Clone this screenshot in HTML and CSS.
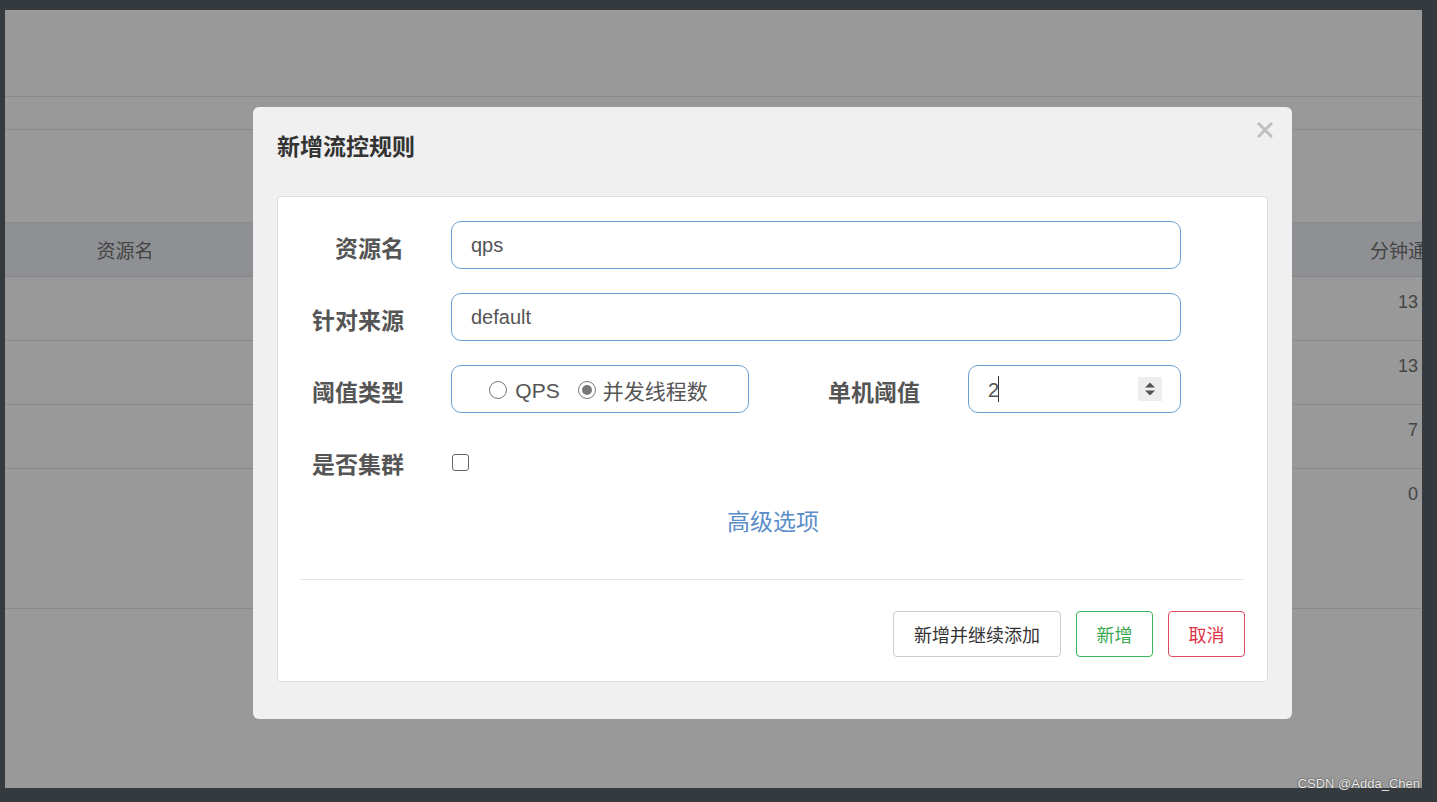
FILE: index.html
```html
<!DOCTYPE html>
<html lang="zh-CN">
<head>
    <meta charset="UTF-8">
    <meta name="viewport" content="width=device-width, initial-scale=1.0">
    <title>新增流控规则</title>
    <link rel="stylesheet" href="styles.css">
</head>
<body>

    <div class="frame">
        <div class="screen">
            <!-- Page behind the dialog -->
            <div class="top-bar"></div>
            <div class="sub-bar"></div>
            <div class="spacer"></div>

            <div class="table-head">
                <div class="cell-name">资源名</div>
                <div class="cell-fill"></div>
                <div class="cell-last">分钟通过</div>
            </div>
            <div class="table-row">
                <div class="cell-fill"></div>
                <div class="cell-num">13</div>
            </div>
            <div class="table-row">
                <div class="cell-fill"></div>
                <div class="cell-num">13</div>
            </div>
            <div class="table-row">
                <div class="cell-fill"></div>
                <div class="cell-num">7</div>
            </div>
            <div class="table-row tall">
                <div class="cell-fill"></div>
                <div class="cell-num">0</div>
            </div>

            <!-- Dialog -->
            <div class="modal">
                <span class="close">
                    <svg width="16" height="16" viewBox="0 0 16 16">
                        <path d="M2 2 L14 14 M14 2 L2 14" stroke="#bfbfbf" stroke-width="3" stroke-linecap="square"/>
                    </svg>
                </span>
                <div class="modal-header">
                    <h3>新增流控规则</h3>
                </div>

                <div class="modal-card">
                    <div class="form-row">
                        <label class="form-label">资源名</label>
                        <input class="form-input" type="text" value="qps">
                    </div>
                    <div class="form-row">
                        <label class="form-label">针对来源</label>
                        <input class="form-input" type="text" value="default">
                    </div>
                    <div class="form-row">
                        <label class="form-label">阈值类型</label>
                        <div class="radio-box">
                            <span class="radio"></span>
                            <span class="radio-text">QPS</span>
                            <span class="radio checked"></span>
                            <span class="radio-text cjk">并发线程数</span>
                        </div>
                        <label class="form-label inline">单机阈值</label>
                        <div class="number-input">
                            <span class="number-value">2</span><span class="caret"></span>
                            <span class="spinner">
                                <svg width="12" height="14" viewBox="0 0 12 14">
                                    <path d="M1 5.5 L6 0.5 L11 5.5 Z M1 8.5 L6 13.5 L11 8.5 Z" fill="#555"/>
                                </svg>
                            </span>
                        </div>
                    </div>
                    <div class="form-row check-row">
                        <label class="form-label">是否集群</label>
                        <span class="checkbox"></span>
                    </div>

                    <div class="advanced"><a href="#">高级选项</a></div>

                    <div class="divider"></div>

                    <div class="actions">
                        <button class="btn btn-default">新增并继续添加</button>
                        <button class="btn btn-success">新增</button>
                        <button class="btn btn-danger">取消</button>
                    </div>
                </div>
            </div>
        </div>
    </div>

    <div class="watermark">CSDN @Adda_Chen</div>

</body>
</html>
```

FILE: styles.css
```css
body {
    font-family: "Liberation Sans", "Noto Sans CJK SC", sans-serif;
    margin: 0;
    padding: 0;
    background-color: #353a3e;
    position: relative;
    width: 1437px;
    height: 802px;
    overflow: hidden;
}

.frame {
    padding: 10px 15px 14px 5px;
}

.screen {
    height: 778px;
    background-color: #999;
    position: relative;
    overflow: hidden;
    color: #444;
}

/* Page behind the dialog */
.top-bar {
    height: 86px;
    border-bottom: 1px solid #8a8a8a;
}

.sub-bar {
    height: 32px;
    border-bottom: 1px solid #8a8a8a;
}

.spacer {
    height: 92px;
}

.table-head {
    display: flex;
    height: 53px;
    background-color: #8e9093;
    border-top: 1px solid #8a8a8a;
    border-bottom: 1px solid #858585;
    align-items: center;
    font-size: 19px;
    font-family: "Noto Sans CJK SC", sans-serif;
}

.cell-name {
    width: 240px;
    text-align: center;
}

.cell-fill {
    flex: 1;
}

.cell-last {
    width: 52px;
    white-space: nowrap;
    overflow: hidden;
}

.table-row {
    display: flex;
    height: 63px;
    border-bottom: 1px solid #8a8a8a;
}

.table-row.tall {
    height: 139px;
}

.cell-num {
    width: 52px;
    text-align: right;
    padding: 14px 4px 0 0;
    line-height: 22px;
    font-size: 18px;
}

/* Dialog */
.modal {
    position: absolute;
    left: 248px;
    top: 97px;
    width: 1039px;
    height: 612px;
    background-color: #f0f0f0;
    border-radius: 6px;
}

.close {
    position: absolute;
    top: 15px;
    right: 19px;
    width: 16px;
    height: 16px;
    cursor: pointer;
}

.close svg {
    display: block;
}

.modal-header {
    height: 89px;
    padding-left: 24px;
    box-sizing: border-box;
}

.modal-header h3 {
    margin: 0;
    padding-top: 24px;
    line-height: 28px;
    font-size: 23px;
    font-weight: bold;
    color: #333;
    font-family: "Noto Sans CJK SC", sans-serif;
}

.modal-card {
    margin: 0 24px;
    background-color: #fff;
    border: 1px solid #ddd;
    border-radius: 4px;
    padding: 24px 22px 24px 23px;
}

.form-row {
    display: flex;
    align-items: center;
    height: 48px;
    margin-bottom: 24px;
}

.form-label {
    width: 103px;
    margin-right: 47px;
    text-align: right;
    padding-top: 4px;
    font-size: 23px;
    font-weight: bold;
    color: #555;
    font-family: "Noto Sans CJK SC", sans-serif;
    white-space: nowrap;
    flex-shrink: 0;
}

.form-label.inline {
    width: 94px;
    text-align: left;
    margin-left: 79px;
    margin-right: 46px;
}

.form-input {
    width: 730px;
    height: 48px;
    box-sizing: border-box;
    border: 1px solid #6a9fd3;
    border-radius: 10px;
    padding: 0 19px;
    font-family: "Liberation Sans", sans-serif;
    font-size: 20px;
    color: #555;
    outline: none;
    background: #fff;
}

.radio-box {
    width: 298px;
    height: 48px;
    flex-shrink: 0;
    box-sizing: border-box;
    border: 1px solid #6a9fd3;
    border-radius: 10px;
    display: flex;
    align-items: center;
    justify-content: center;
    padding-right: 3px;
    font-size: 21px;
    color: #555;
}

.radio {
    width: 18px;
    height: 18px;
    box-sizing: border-box;
    border: 1px solid #777;
    border-radius: 50%;
    margin-right: 8px;
    margin-top: 2px;
    position: relative;
}

.radio.checked::after {
    content: "";
    position: absolute;
    left: 3px;
    top: 3px;
    width: 10px;
    height: 10px;
    border-radius: 50%;
    background-color: #777;
}

.radio-text {
    margin-right: 18px;
    padding-top: 4px;
}

.radio-text.cjk {
    margin-right: 0;
    margin-left: -1px;
    padding-top: 2px;
    font-family: "Noto Sans CJK SC", sans-serif;
}

.number-input {
    width: 213px;
    height: 48px;
    flex-shrink: 0;
    box-sizing: border-box;
    border: 1px solid #6a9fd3;
    border-radius: 10px;
    padding: 0 18px 0 19px;
    display: flex;
    align-items: center;
    font-size: 20px;
    color: #555;
}

.number-value {
    padding-top: 2px;
}

.caret {
    width: 1px;
    height: 26px;
    background-color: #333;
    margin-left: -1px;
}

.spinner {
    margin-left: auto;
    width: 24px;
    height: 24px;
    background-color: #eee;
    display: flex;
    align-items: center;
    justify-content: center;
}

.spinner svg {
    display: block;
}

.check-row {
    height: 50px;
    margin-bottom: 0;
}

.check-row .form-label {
    padding-top: 1px;
}

.checkbox {
    width: 17px;
    height: 17px;
    box-sizing: border-box;
    border: 1px solid #666;
    border-radius: 3px;
    margin-left: 1px;
}

.advanced {
    margin-top: 16px;
    line-height: 34px;
    text-align: center;
    font-size: 23px;
    font-family: "Noto Sans CJK SC", sans-serif;
}

.advanced a {
    color: #5b8dc9;
    text-decoration: none;
}

.divider {
    margin-top: 42px;
    margin-right: 1px;
    height: 1px;
    background-color: #e5e5e5;
}

.actions {
    margin-top: 31px;
    display: flex;
    justify-content: flex-end;
    gap: 15px;
}

.btn {
    height: 46px;
    padding: 0;
    background-color: #fff;
    border: 1px solid #ccc;
    border-radius: 4px;
    font-size: 18px;
    font-family: "Noto Sans CJK SC", sans-serif;
    color: #333;
    cursor: pointer;
}

.btn-default {
    width: 168px;
}

.btn-success {
    width: 77px;
    border-color: #3cb55a;
    color: #3aa94f;
}

.btn-danger {
    width: 77px;
    border-color: #e2495a;
    color: #dc3545;
}

.watermark {
    position: absolute;
    right: 17px;
    top: 776px;
    font-size: 13px;
    color: #eee;
    text-shadow: 0 0 2px #444, 0 0 1px #444;
    font-family: "Liberation Sans", sans-serif;
}
```
